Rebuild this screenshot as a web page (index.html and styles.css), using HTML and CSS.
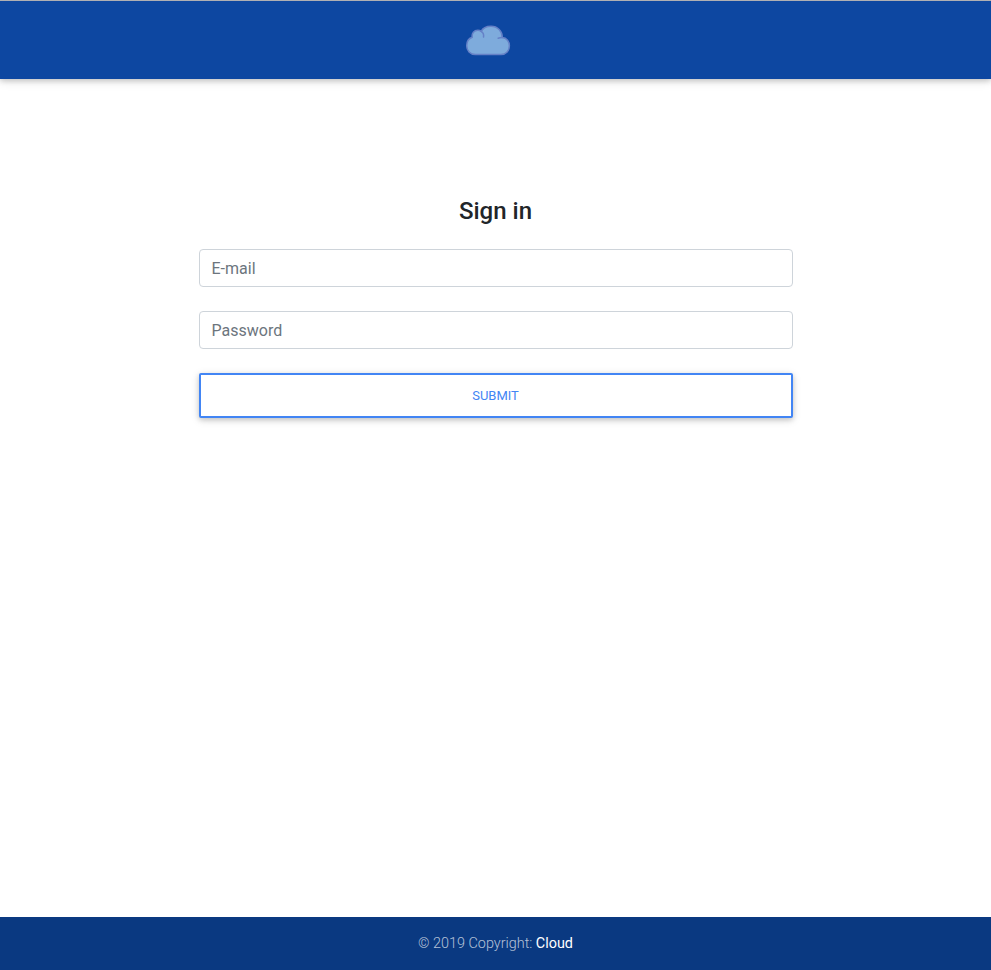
FILE: index.html
```html
<!DOCTYPE html>
<html lang="en">
<head>
  <meta charset="utf-8">
  <title>Sign in</title>
  <link rel="stylesheet" href="styles.css">
</head>
<body>
  <header class="navbar">
    <a class="brand" href="#" aria-label="Cloud">
      <svg class="logo" width="46" height="32" viewBox="0 0 46 32" fill="#7eabdc" stroke="#6581c7" stroke-width="1.5" stroke-linecap="round">
        <path d="M10.5 29.5C5 29.5 1.7 25.5 1.7 20.8C1.7 16.6 4 13.4 7.2 12.3C6.5 8 9.2 5.3 12.8 5.3C14.2 5.3 15.2 5.6 16.2 6.3C17.8 3 21.8 1.2 26 1.2C32.5 1.2 37.4 6 37.3 12.6C41.7 12.8 44.4 16.6 44.4 20.8C44.4 25.8 41.2 29.5 36 29.5Z"/>
        <path fill="none" d="M16.2 6.3C18.2 7.6 19 9.6 18.5 12M33.2 13.3C34.6 12.8 36 12.5 37.3 12.6"/>
      </svg>
    </a>
  </header>
  <main class="content">
    <form class="form">
      <h1 class="title">Sign in</h1>
      <input class="field" type="email" placeholder="E-mail" aria-label="E-mail">
      <input class="field" type="password" placeholder="Password" aria-label="Password">
      <button class="submit" type="button">Submit</button>
    </form>
  </main>
  <footer class="footer">© 2019 Copyright: <a class="footer-link" href="#">Cloud</a></footer>
</body>
</html>
```

FILE: styles.css
```css
* { box-sizing: border-box; }
body {
  margin: 0;
  min-height: 100vh;
  display: flex;
  flex-direction: column;
  background: #fff;
  color: #212529;
  font: 400 16px/1.5 Roboto, sans-serif;
}
.navbar {
  height: 79px;
  display: flex;
  justify-content: center;
  padding: 24px 16px 0 0;
  border-top: 1px solid #b0b0b3;
  background: #0d47a1;
  box-shadow: 0 2px 5px rgba(0, 0, 0, .16), 0 2px 10px rgba(0, 0, 0, .12);
}
.brand { height: 32px; }
.logo { display: block; }
.content { flex: 1; padding-top: 118px; }
.form {
  width: 594px;
  margin: 0 auto;
  display: flex;
  flex-direction: column;
}
.title {
  margin: 0 0 23px;
  font-size: 24px;
  font-weight: 500;
  line-height: 29px;
  text-align: center;
}
.field {
  height: 38px;
  margin: 0 0 24px;
  padding: 6px 12px;
  border: 1px solid #ced4da;
  border-radius: 4px;
  background: #fff;
  font: inherit;
}
.field::placeholder { color: #6c757d; opacity: 1; }
.submit {
  height: 45px;
  padding: 0;
  border: 2px solid #4285f4;
  border-radius: 2px;
  background: #fff;
  box-shadow: 0 2px 5px rgba(0, 0, 0, .16), 0 2px 10px rgba(0, 0, 0, .12);
  color: #4285f4;
  font: 400 12.96px/1.5 Roboto, sans-serif;
  text-transform: uppercase;
}
.footer {
  height: 53px;
  padding: 16px;
  background: #0a3981;
  color: rgba(255, 255, 255, .7);
  font-size: 14.4px;
  font-weight: 300;
  line-height: 21px;
  text-align: center;
}
.footer-link { color: #fff; font-weight: 400; text-decoration: none; }
```
